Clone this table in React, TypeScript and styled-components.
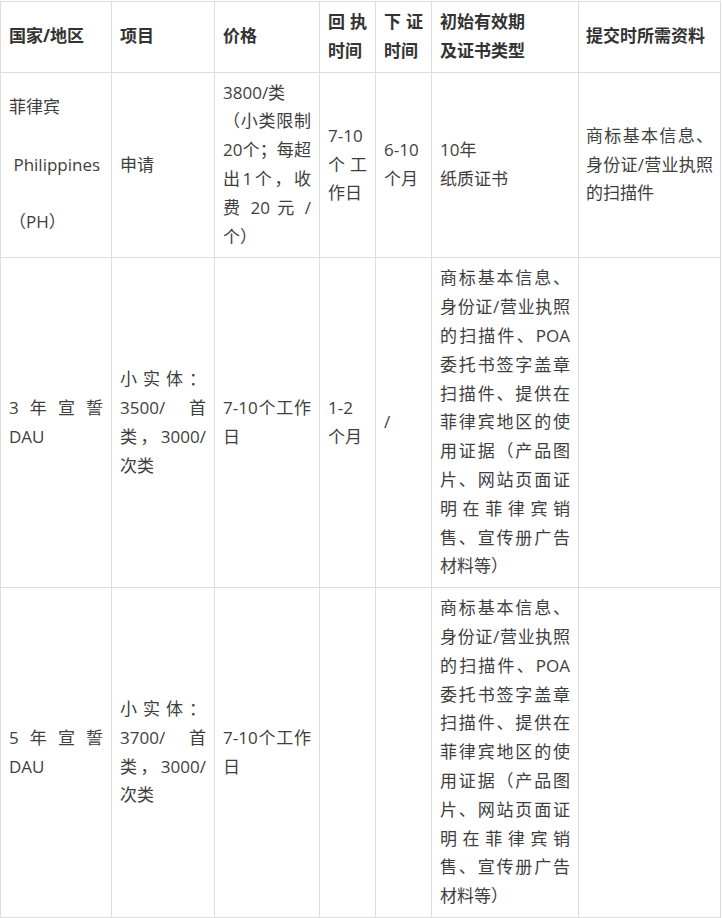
import React from "react";
import styled, { createGlobalStyle, css } from "styled-components";

const GlobalStyle = createGlobalStyle`
  html, body {
    margin: 0;
    padding: 0;
    background: #ffffff;
  }
  body {
    font-family: "Open Sans", "Noto Sans CJK SC", sans-serif;
  }
`;

const Table = styled.table`
  border-collapse: collapse;
  table-layout: fixed;
  margin-top: 1px;
  font-size: 17px;
  line-height: 28.8px;
  color: #3e3e3e;
  text-spacing-trim: space-all;
  text-autospace: no-autospace;
`;

const Col = styled.col<{ $w: number }>`
  width: ${(p) => p.$w}px;
`;

const cellBase = css<{ $pl?: number; $pr?: number }>`
  border: 1px solid #dddddd;
  padding: 6px ${(p) => p.$pr ?? 8}px 6px ${(p) => p.$pl ?? 8}px;
  vertical-align: middle;
  text-align: justify;
  word-break: normal;
`;

const Cell = styled.td<{ $pl?: number; $pr?: number }>`
  ${cellBase}
  font-weight: 400;
`;

const HeadCell = styled.th<{ $pl?: number; $pr?: number }>`
  ${cellBase}
  font-weight: 700;
  color: #333333;
`;

const Stack = styled.div`
  display: flex;
  flex-direction: column;
  gap: 28.8px;
`;

const COLS = [111, 103, 105, 56, 56, 147, 142];

const pad7 = { $pl: 7, $pr: 7 };

const MATERIALS =
  "商标基本信息、身份证/营业执照的扫描件、POA委托书签字盖章扫描件、提供在菲律宾地区的使用证据（产品图片、网站页面证明在菲律宾销售、宣传册广告材料等）";

export default function App() {
  return (
    <>
      <GlobalStyle />
      <Table lang="zh-CN">
        <colgroup>
          {COLS.map((w, i) => (
            <Col key={i} $w={w} />
          ))}
        </colgroup>
        <thead>
          <tr>
            <HeadCell>国家/地区</HeadCell>
            <HeadCell>项目</HeadCell>
            <HeadCell>价格</HeadCell>
            <HeadCell>回执时间</HeadCell>
            <HeadCell>下证时间</HeadCell>
            <HeadCell>
              初始有效期
              <br />
              及证书类型
            </HeadCell>
            <HeadCell {...pad7}>提交时所需资料</HeadCell>
          </tr>
        </thead>
        <tbody>
          <tr>
            <Cell>
              <Stack>
                <span>菲律宾</span>
                <span>&nbsp;Philippines</span>
                <span>（PH）</span>
              </Stack>
            </Cell>
            <Cell>申请</Cell>
            <Cell>
              3800/类
              <br />
              （小类限制20个；每超出1个，收费 20 元 /个）
            </Cell>
            <Cell>7-10个工作日</Cell>
            <Cell>6-10个月</Cell>
            <Cell>
              10年
              <br />
              纸质证书
            </Cell>
            <Cell {...pad7}>商标基本信息、身份证/营业执照的扫描件</Cell>
          </tr>
          <tr>
            <Cell>3年宣誓DAU</Cell>
            <Cell>小实体：3500/首类，3000/次类</Cell>
            <Cell>7-10个工作日</Cell>
            <Cell>1-2个月</Cell>
            <Cell>/</Cell>
            <Cell>{MATERIALS}</Cell>
            <Cell {...pad7}></Cell>
          </tr>
          <tr>
            <Cell>5年宣誓DAU</Cell>
            <Cell>小实体：3700/首类，3000/次类</Cell>
            <Cell>7-10个工作日</Cell>
            <Cell></Cell>
            <Cell></Cell>
            <Cell>{MATERIALS}</Cell>
            <Cell {...pad7}></Cell>
          </tr>
        </tbody>
      </Table>
    </>
  );
}
